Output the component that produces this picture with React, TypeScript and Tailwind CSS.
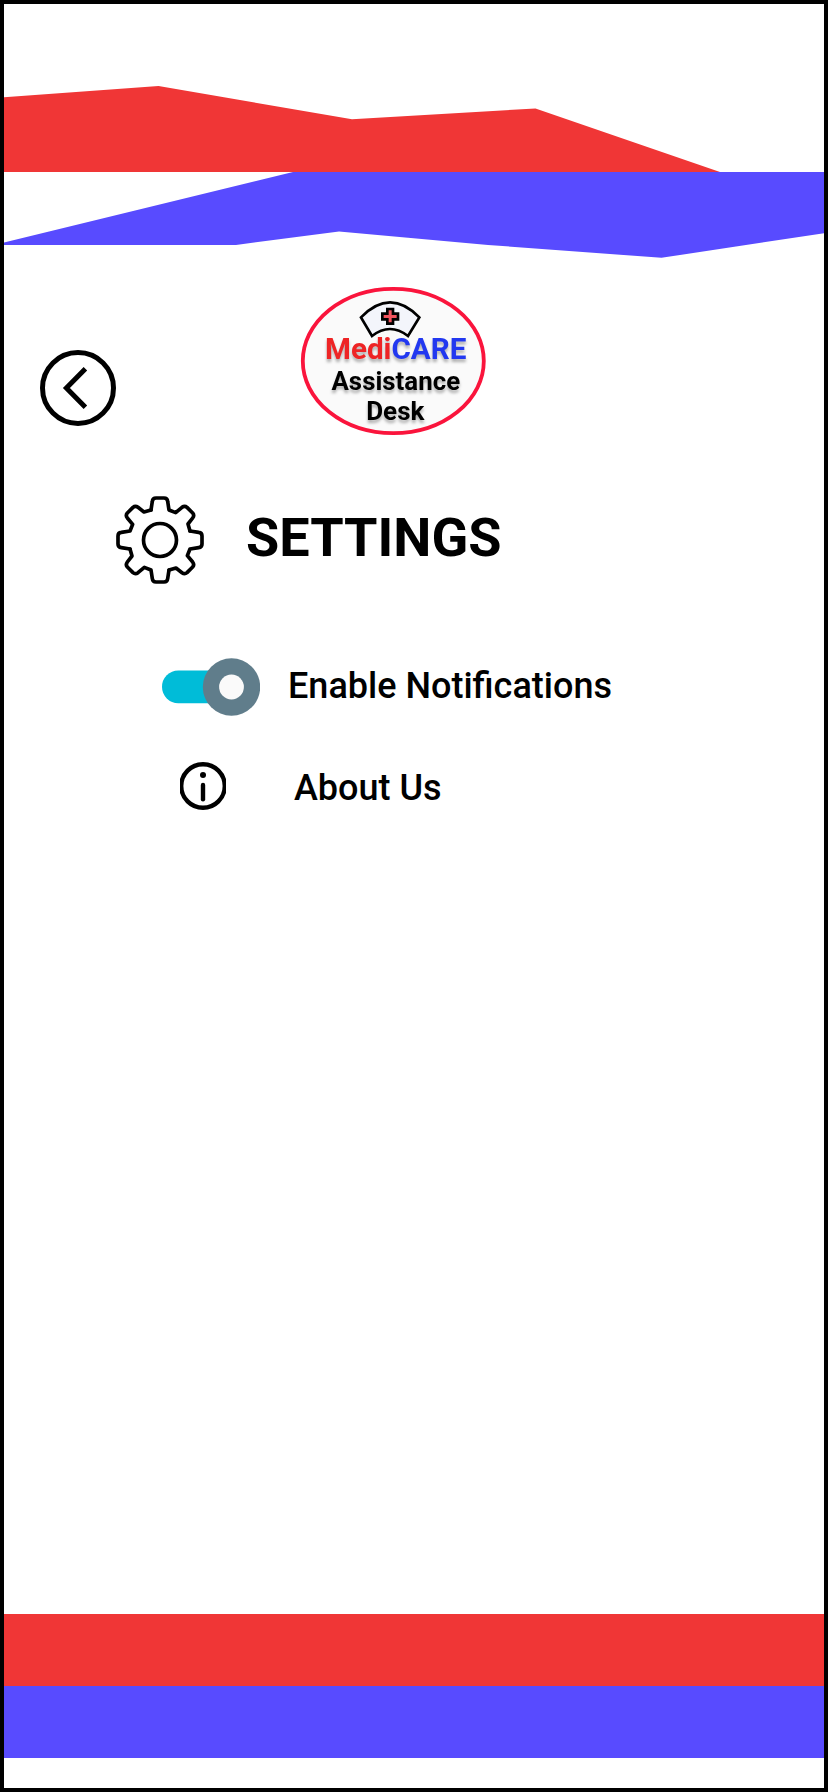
import React from "react";

function TopBands() {
  return (
    <svg viewBox="4 4 820 272" className="block h-[272px] w-[820px]" aria-hidden="true">
      <polygon fill="#f03636" points="4,97.2 158.5,86 352,119.3 535.5,108.4 720,172 4,172" />
      <polygon
        fill="#584bff"
        points="4,242.6 293,172 824,172 824,233.2 661.5,257.8 488,245 408,237.8 339,231.4 236,245 4,245"
      />
    </svg>
  );
}

function BackIcon() {
  return (
    <svg viewBox="0 0 76 76" className="block size-[76px]" fill="none" stroke="#000">
      <circle cx="38" cy="38" r="35.5" strokeWidth="5" />
      <path d="M45.4 18.8 L26.4 38 L45.4 57.2" strokeWidth="5" />
    </svg>
  );
}

function Logo() {
  return (
    <svg
      viewBox="0 0 210 170"
      className="block h-[170px] w-[210px] font-['Roboto',sans-serif] font-bold"
    >
      <ellipse cx="103.3" cy="85" rx="90.5" ry="72.2" fill="#fafafa" stroke="#fa143c" strokeWidth="3.8" />
      <g transform="scale(0.33333)">
        <path
          d="M213 124 Q300 34 388 124 L354 180 Q300 138 246 180 Z"
          fill="#f3f5fb"
          stroke="#000"
          strokeWidth="8"
        />
        <path
          d="M292 99 H309 V113 H324 V130 H309 V143 H292 V130 H277 V113 H292 Z"
          fill="#f0535d"
          stroke="#000"
          strokeWidth="8"
        />
      </g>
      <g className="[filter:drop-shadow(0_3px_1.5px_rgba(0,0,0,0.3))]">
        <text x="35" y="82.7" fontSize="29.5" textLength="141.3" lengthAdjust="spacingAndGlyphs">
          <tspan fill="#ee2425">Medi</tspan>
          <tspan fill="#2238f0">CARE</tspan>
        </text>
        <text x="41.5" y="113.6" fontSize="26" textLength="128.6" lengthAdjust="spacingAndGlyphs">
          Assistance
        </text>
        <text x="76.2" y="143.7" fontSize="26" textLength="58.2" lengthAdjust="spacingAndGlyphs">
          Desk
        </text>
      </g>
    </svg>
  );
}

const gearQuarter =
  "M153 90 L157 64 Q158 54 168 54 H192 Q202 54 203 64 L207 90 L227 98 L246 82 Q254 76 261 82 L278 99 Q284 106 278 114 L264 132 L270 153";

function GearIcon() {
  return (
    <svg
      viewBox="48 48 264 264"
      className="block size-[88px]"
      fill="none"
      stroke="#000"
      strokeWidth="11"
      strokeLinecap="round"
      strokeLinejoin="round"
    >
      <circle cx="180" cy="180" r="49.5" />
      {[0, 90, 180, 270].map((angle) => (
        <path key={angle} d={gearQuarter} transform={`rotate(${angle} 180 180)`} />
      ))}
    </svg>
  );
}

function Toggle() {
  return (
    <button role="switch" aria-checked="true" aria-label="Enable Notifications" className="block">
      <svg viewBox="0 0 98 58" className="block h-[58px] w-[98px]">
        <rect x="0" y="12.5" width="80" height="32.7" rx="16.35" fill="#00bcd8" />
        <circle cx="69.5" cy="29" r="28.7" fill="#607d8b" />
        <circle cx="69.5" cy="29" r="12.4" fill="#fafafa" />
      </svg>
    </button>
  );
}

function InfoIcon() {
  return (
    <svg viewBox="0 0 46 48" className="block h-12 w-[46px]" fill="none" stroke="#000">
      <circle cx="23" cy="24" r="21.8" strokeWidth="4.4" />
      <circle cx="23" cy="13" r="3" fill="#000" stroke="none" />
      <path d="M23 23 V37.3" strokeWidth="4.4" strokeLinecap="round" />
    </svg>
  );
}

export default function App() {
  return (
    <main className="flex h-[1792px] w-[828px] flex-col border-4 border-black bg-white font-['Roboto',sans-serif] text-black">
      <TopBands />
      <header className="flex h-[170px] pl-9">
        <button aria-label="Back" className="mt-[74px] size-[76px]">
          <BackIcon />
        </button>
        <div className="ml-[174px]">
          <Logo />
        </div>
      </header>

      <div className="mt-[50px] flex h-[88px] items-center pl-28">
        <GearIcon />
        <h1 className="ml-[42px] pb-1 text-[54px] leading-[64px] font-bold">SETTINGS</h1>
      </div>

      <div className="mt-[74px] flex h-[58px] items-center pl-[158px]">
        <Toggle />
        <span className="ml-[28px] pb-[3px] text-[36px] leading-[42px] font-medium">Enable Notifications</span>
      </div>

      <div className="mt-[46px] flex h-12 items-center pl-[176px]">
        <InfoIcon />
        <span className="ml-[68px] pt-[3px] text-[36px] leading-[42px] font-medium">About Us</span>
      </div>

      <footer className="mt-auto pb-[30px]">
        <div className="h-[72px] bg-[#f03636]" />
        <div className="h-[72px] bg-[#584bff]" />
      </footer>
    </main>
  );
}
